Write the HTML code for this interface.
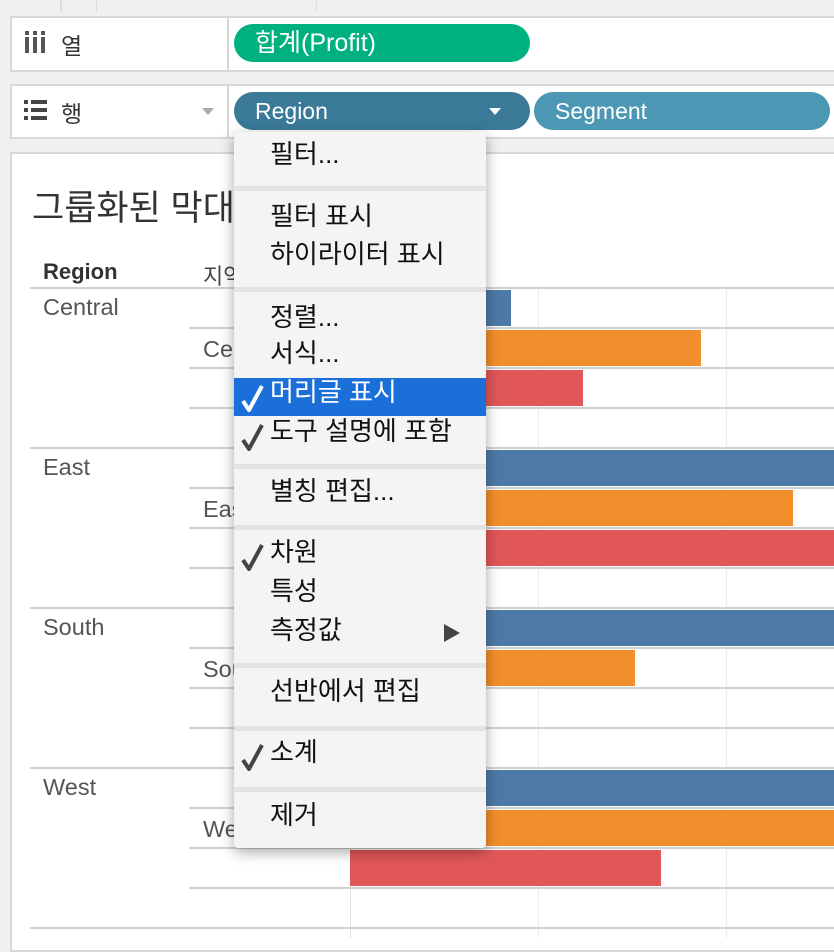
<!DOCTYPE html>
<html><head><meta charset="utf-8"><style>
*{margin:0;padding:0;box-sizing:border-box}
body{width:834px;height:940px;background:#f0f0f0;position:relative;overflow:hidden;font-family:"Liberation Sans","Noto Sans CJK KR",sans-serif;color:#333}
.a{position:absolute}
.shelf{position:absolute;left:10px;right:-4px;background:#fff;border:2px solid #d8d8d8}
.pill{position:absolute;height:38px;border-radius:19px;color:#fff;font-size:23px;line-height:38px;padding-left:21px}
.hl{position:absolute;height:2px;background:#d0d0d0}
.vl{position:absolute;width:1px;background:#ececec}
.bar{position:absolute;height:36px}
.b{background:#4e79a7}.o{background:#f28e2b}.r{background:#e15759}
.lbl{position:absolute;font-size:23.5px;color:#555}
.menu{position:absolute;left:234px;top:132px;width:252px;height:716px;background:#f4f4f4;border-radius:4px;box-shadow:0 4px 14px rgba(0,0,0,.35);font-size:26px;color:#111}
.mi{position:absolute;left:36px;line-height:36px;white-space:nowrap}
.sep{position:absolute;left:0;right:0;height:5px;background:#e3e3e3}
.ck{position:absolute;left:6px;width:26px;height:30px}
</style></head><body>
<div class="a" style="left:60px;top:0;width:2px;height:12px;background:#ddd"></div>
<div class="a" style="left:96px;top:0;width:1px;height:12px;background:#ddd"></div>
<div class="a" style="left:316px;top:0;width:1px;height:12px;background:#ddd"></div>

<div class="shelf" style="top:16px;height:56px"></div>
<div class="a" style="left:227px;top:18px;width:2px;height:52px;background:#d8d8d8"></div>
<div class="a" style="left:25px;top:31px;width:4px;height:4px;background:#555"></div>
<div class="a" style="left:33px;top:31px;width:4px;height:4px;background:#555"></div>
<div class="a" style="left:41px;top:31px;width:4px;height:4px;background:#555"></div>
<div class="a" style="left:25px;top:37px;width:4px;height:16px;background:#555"></div>
<div class="a" style="left:33px;top:37px;width:4px;height:16px;background:#555"></div>
<div class="a" style="left:41px;top:37px;width:4px;height:16px;background:#555"></div>
<div class="a" style="left:61px;top:27px;font-size:23px;color:#333">열</div>
<div class="pill" style="left:234px;top:24px;width:296px;background:#00b180;font-size:25px">합계(Profit)</div>

<div class="shelf" style="top:84px;height:55px"></div>
<div class="a" style="left:227px;top:86px;width:2px;height:51px;background:#d8d8d8"></div>
<div class="a" style="left:24px;top:100px;width:4px;height:4px;background:#444"></div>
<div class="a" style="left:31px;top:100px;width:16px;height:4px;background:#444"></div>
<div class="a" style="left:24px;top:108px;width:4px;height:4px;background:#444"></div>
<div class="a" style="left:31px;top:108px;width:16px;height:4px;background:#444"></div>
<div class="a" style="left:24px;top:116px;width:4px;height:4px;background:#444"></div>
<div class="a" style="left:31px;top:116px;width:16px;height:4px;background:#444"></div>
<div class="a" style="left:61px;top:95px;font-size:23px;color:#333">행</div>
<div class="a" style="left:202px;top:108px;border-left:6px solid transparent;border-right:6px solid transparent;border-top:7px solid #aaa"></div>
<div class="pill" style="left:234px;top:92px;width:296px;background:#3a7a98">Region</div>
<div class="a" style="left:489px;top:108px;border-left:6px solid transparent;border-right:6px solid transparent;border-top:7px solid #fff"></div>
<div class="pill" style="left:534px;top:92px;width:296px;background:#4b97b4">Segment</div>

<div class="a" style="left:10px;top:152px;width:830px;height:800px;background:#fff;border:2px solid #d8d8d8"></div>
<div class="a" style="left:32px;top:180px;font-size:35px;color:#333">그룹화된 막대 그래프</div>
<div class="a" style="left:43px;top:259px;font-size:22px;color:#333;font-weight:bold">Region</div>
<div class="a" style="left:203px;top:259px;font-size:22px;color:#444">지역이름</div>

<div class="vl" style="left:350px;top:288px;height:650px;background:#e2e2e2"></div>
<div class="vl" style="left:538px;top:288px;height:650px"></div>
<div class="vl" style="left:726px;top:288px;height:650px"></div>

<div class="hl" style="left:30px;right:0;top:287px"></div>
<div class="hl" style="left:30px;right:0;top:447px"></div>
<div class="hl" style="left:30px;right:0;top:607px"></div>
<div class="hl" style="left:30px;right:0;top:767px"></div>
<div class="hl" style="left:30px;right:0;top:927px"></div>
<div class="hl" style="left:189px;right:0;top:327px"></div><div class="hl" style="left:189px;right:0;top:367px"></div><div class="hl" style="left:189px;right:0;top:407px"></div>
<div class="hl" style="left:189px;right:0;top:487px"></div><div class="hl" style="left:189px;right:0;top:527px"></div><div class="hl" style="left:189px;right:0;top:567px"></div>
<div class="hl" style="left:189px;right:0;top:647px"></div><div class="hl" style="left:189px;right:0;top:687px"></div><div class="hl" style="left:189px;right:0;top:727px"></div>
<div class="hl" style="left:189px;right:0;top:807px"></div><div class="hl" style="left:189px;right:0;top:847px"></div><div class="hl" style="left:189px;right:0;top:887px"></div>

<div class="lbl" style="left:43px;top:294px">Central</div>
<div class="lbl" style="left:43px;top:454px">East</div>
<div class="lbl" style="left:43px;top:614px">South</div>
<div class="lbl" style="left:43px;top:774px">West</div>
<div class="lbl" style="left:203px;top:336px">Central</div>
<div class="lbl" style="left:203px;top:496px">East</div>
<div class="lbl" style="left:203px;top:656px">South</div>
<div class="lbl" style="left:203px;top:816px">West</div>

<div class="bar b" style="left:350px;top:290px;width:161px"></div>
<div class="bar o" style="left:350px;top:330px;width:351px"></div>
<div class="bar r" style="left:350px;top:370px;width:233px"></div>
<div class="bar b" style="left:350px;top:450px;width:484px"></div>
<div class="bar o" style="left:350px;top:490px;width:443px"></div>
<div class="bar r" style="left:350px;top:530px;width:484px"></div>
<div class="bar b" style="left:350px;top:610px;width:484px"></div>
<div class="bar o" style="left:350px;top:650px;width:285px"></div>
<div class="bar b" style="left:350px;top:770px;width:484px"></div>
<div class="bar o" style="left:350px;top:810px;width:484px"></div>
<div class="bar r" style="left:350px;top:850px;width:311px"></div>

<div class="menu">
<div class="mi" style="top:4px">필터...</div>
<div class="sep" style="top:54px"></div>
<div class="mi" style="top:66px">필터 표시</div>
<div class="mi" style="top:104px">하이라이터 표시</div>
<div class="sep" style="top:155px"></div>
<div class="mi" style="top:167px">정렬...</div>
<div class="mi" style="top:203px">서식...</div>
<div class="a" style="left:0;right:0;top:246px;height:38px;background:#1a6fd8"></div>
<svg class="ck" style="top:251px" viewBox="0 0 26 30"><path d="M3 18 L9 27 L22 3" fill="none" stroke="#fff" stroke-width="4" stroke-linejoin="round"/></svg>
<div class="mi" style="top:242px;color:#fff">머리글 표시</div>
<svg class="ck" style="top:290px" viewBox="0 0 26 30"><path d="M3 18 L9 27 L22 3" fill="none" stroke="#444" stroke-width="4" stroke-linejoin="round"/></svg>
<div class="mi" style="top:281px">도구 설명에 포함</div>
<div class="sep" style="top:332px"></div>
<div class="mi" style="top:341px">별칭 편집...</div>
<div class="sep" style="top:393px"></div>
<svg class="ck" style="top:410px" viewBox="0 0 26 30"><path d="M3 18 L9 27 L22 3" fill="none" stroke="#444" stroke-width="4" stroke-linejoin="round"/></svg>
<div class="mi" style="top:402px">차원</div>
<div class="mi" style="top:441px">특성</div>
<div class="mi" style="top:480px">측정값</div>
<div class="a" style="left:210px;top:492px;border-top:9px solid transparent;border-bottom:9px solid transparent;border-left:16px solid #444"></div>
<div class="sep" style="top:531px"></div>
<div class="mi" style="top:541px">선반에서 편집</div>
<div class="sep" style="top:594px"></div>
<svg class="ck" style="top:610px" viewBox="0 0 26 30"><path d="M3 18 L9 27 L22 3" fill="none" stroke="#444" stroke-width="4" stroke-linejoin="round"/></svg>
<div class="mi" style="top:602px">소계</div>
<div class="sep" style="top:655px"></div>
<div class="mi" style="top:665px">제거</div>
</div>
</body></html>
